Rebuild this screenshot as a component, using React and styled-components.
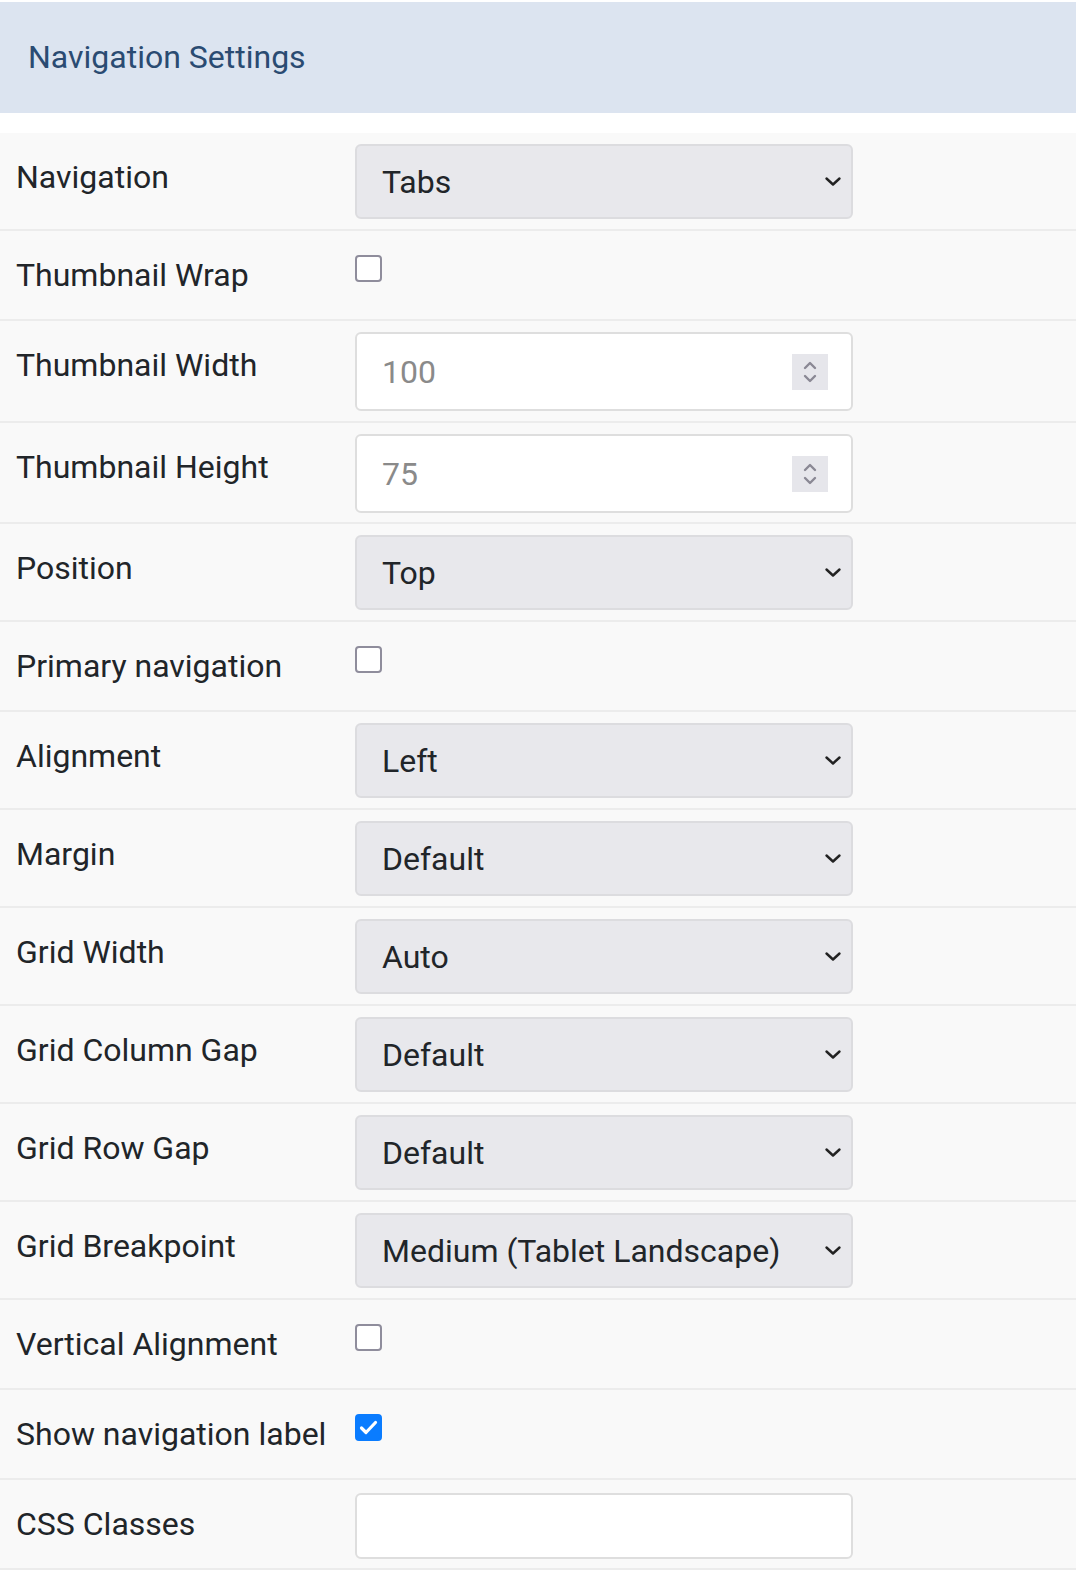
import { createGlobalStyle, styled } from "styled-components";

const GlobalStyle = createGlobalStyle`
  html, body {
    margin: 0;
    padding: 0;
    background: #ffffff;
  }
  body {
    font-family: Roboto, "Liberation Sans", Arial, sans-serif;
    color: #212529;
  }
`;

const fields = [
    { label: "Navigation", type: "select", value: "Tabs" },
    { label: "Thumbnail Wrap", type: "checkbox" },
    { label: "Thumbnail Width", type: "number", value: "100", h: 102 },
    { label: "Thumbnail Height", type: "number", value: "75" },
    { label: "Position", type: "select", value: "Top" },
    { label: "Primary navigation", type: "checkbox" },
    { label: "Alignment", type: "select", value: "Left" },
    { label: "Margin", type: "select", value: "Default" },
    { label: "Grid Width", type: "select", value: "Auto" },
    { label: "Grid Column Gap", type: "select", value: "Default" },
    { label: "Grid Row Gap", type: "select", value: "Default" },
    { label: "Grid Breakpoint", type: "select", value: "Medium (Tablet Landscape)" },
    { label: "Vertical Alignment", type: "checkbox" },
    { label: "Show navigation label", type: "checkbox", checked: true },
    { label: "CSS Classes", type: "text" },
];

// row height and control offset, per kind of control
const rowSize = {
    select: { h: 98, top: 11 },
    number: { h: 101, top: 11 },
    checkbox: { h: 90, top: 24 },
    text: { h: 90, top: 13 },
};

function Chevron() {
    return (
        <svg width="18" height="11" viewBox="0 0 18 11">
            <path d="M2.5 2.5l6.5 6 6.5-6" fill="none" stroke="#222" strokeWidth="2.4" strokeLinecap="round" strokeLinejoin="round" />
        </svg>
    );
}

function Spinner() {
    return (
        <Spin>
            <svg width="16" height="26" viewBox="0 0 16 26">
                <path d="M3 9l5-5 5 5" fill="none" stroke="#8a8894" strokeWidth="2.4" strokeLinecap="round" strokeLinejoin="round" />
                <path d="M3 17l5 5 5-5" fill="none" stroke="#8a8894" strokeWidth="2.4" strokeLinecap="round" strokeLinejoin="round" />
            </svg>
        </Spin>
    );
}

function Control({ field }) {
    if (field.type === "select") {
        return (
            <Select>
                <span>{field.value}</span>
                <Chevron />
            </Select>
        );
    }
    if (field.type === "number") {
        return (
            <NumberBox>
                <span>{field.value}</span>
                <Spinner />
            </NumberBox>
        );
    }
    if (field.type === "checkbox") {
        return (
            <Check $checked={field.checked}>
                {field.checked && (
                    <svg width="23" height="23" viewBox="0 0 23 23">
                        <path d="M4.5 12l4.5 4.5L18.5 6.5" fill="none" stroke="#fff" strokeWidth="3.2" strokeLinecap="round" strokeLinejoin="round" />
                    </svg>
                )}
            </Check>
        );
    }
    return <TextBox />;
}

function App() {
    return (
        <>
            <GlobalStyle />
            <Panel>
                <Header>Navigation Settings</Header>
                <Form>
                    {fields.map((f) => (
                        <Row key={f.label} $h={f.h || rowSize[f.type].h}>
                            <Label>{f.label}</Label>
                            <Cell $top={rowSize[f.type].top}>
                                <Control field={f} />
                            </Cell>
                        </Row>
                    ))}
                </Form>
            </Panel>
        </>
    );
}

export default App;

const Panel = styled.div`
    width: 1076px;
    padding-top: 2px;
`;

const Header = styled.div`
    height: 111px;
    box-sizing: border-box;
    padding: 0 28px 2px;
    display: flex;
    align-items: center;
    background: #dce4f0;
    color: #2a4b72;
    font-size: 32px;
    margin-bottom: 20px;
`;

const Form = styled.div`
    display: flex;
    flex-direction: column;
`;

const Row = styled.div`
    display: grid;
    grid-template-columns: 339px 498px;
    align-items: start;
    box-sizing: border-box;
    height: ${(p) => p.$h}px;
    padding-left: 16px;
    background: #f9f9f9;
    border-bottom: 2px solid #ececec;
`;

const Label = styled.div`
    font-size: 32px;
    line-height: 48px;
    padding-top: 20px;
    color: #212529;
    white-space: nowrap;
`;

const Cell = styled.div`
    padding-top: ${(p) => p.$top}px;
`;

const Select = styled.div`
    box-sizing: border-box;
    height: 75px;
    display: flex;
    align-items: center;
    justify-content: space-between;
    padding: 0 9px 0 25px;
    background: #e8e8ec;
    border: 2px solid #dcdcdf;
    border-radius: 6px;
    font-size: 32px;
    color: #212529;
`;

const NumberBox = styled.div`
    box-sizing: border-box;
    height: 79px;
    display: flex;
    align-items: center;
    justify-content: space-between;
    padding: 0 23px 0 25px;
    background: #ffffff;
    border: 2px solid #dedede;
    border-radius: 6px;
    font-size: 32px;
    color: #8a8a8a;
`;

const Spin = styled.div`
    width: 36px;
    height: 36px;
    background: #e6e6eb;
    display: flex;
    align-items: center;
    justify-content: center;
`;

const Check = styled.div`
    box-sizing: border-box;
    width: 27px;
    height: 27px;
    border-radius: 4px;
    border: 2px solid ${(p) => (p.$checked ? "#0a7cff" : "#8f8d9c")};
    background: ${(p) => (p.$checked ? "#0a7cff" : "#ffffff")};
    display: flex;
    align-items: center;
    justify-content: center;
`;

const TextBox = styled.div`
    box-sizing: border-box;
    height: 66px;
    background: #ffffff;
    border: 2px solid #dedede;
    border-radius: 6px;
`;
